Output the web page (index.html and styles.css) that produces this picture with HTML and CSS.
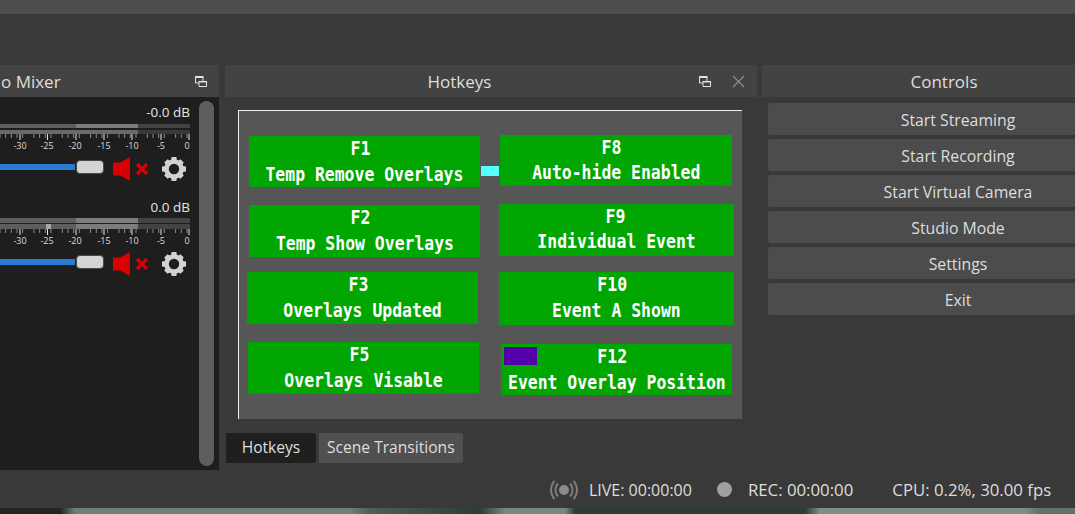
FILE: index.html
```html
<!DOCTYPE html>
<html lang="en">
<head>
  <meta charset="UTF-8">
  <title>Hotkeys</title>
<link rel="stylesheet" href="styles.css">
</head>
<body>

  <svg class="defs" width="0" height="0">
    <defs>
      <g id="scale">
        <path d="M0 0v4M5.66 0v4M11.3 0v4M17 0v4M22.6 0v4M34 0v4M39.6 0v4M45.3 0v4M51 0v4M62.3 0v4M68 0v4M73.6 0v4M79.3 0v4M90.6 0v4M96.3 0v4M102 0v4M107.6 0v4M119 0v4M124.6 0v4M130.3 0v4M136 0v4M147.3 0v4M153 0v4M158.6 0v4M164.3 0v4M175.6 0v4M181.3 0v4M187 0v4" stroke="#8a8a8a" stroke-width="1"/>
        <path d="M20 0v6M47.5 0v6M76 0v6M104 0v6M132 0v6M161 0v6M189 0v6" stroke="#e6e6e6" stroke-width="1"/>
        <g class="scale-nums">
          <text x="20" y="15">-30</text>
          <text x="47" y="15">-25</text>
          <text x="75" y="15">-20</text>
          <text x="104" y="15">-15</text>
          <text x="132" y="15">-10</text>
          <text x="161" y="15">-5</text>
          <text x="187" y="15">0</text>
        </g>
      </g>
      <g id="speaker">
        <path d="M0 5.500h7L17 0v24L7 18.500H0z" fill="#d80000"/>
        <path d="M24 7l10 10M34 7L24 17" stroke="#d80000" stroke-width="3.200" fill="none"/>
      </g>
      <g id="gear">
        <path d="M12 4.500a7.500 7.500 0 1 0 0 15a7.500 7.500 0 1 0 0-15z" fill="none" stroke="#d2d2d2" stroke-width="4.600"/>
        <path d="M9.600 0h4.800l.6 4h-6zM9.600 24h4.800l.6-4h-6zM0 9.600v4.800l4 .6v-6zM24 9.600v4.800l-4 .6v-6zM2.200 5.600l3.400-3.400 3.200 2.400-4.200 4.200zM21.800 5.600l-3.400-3.400-3.200 2.400 4.200 4.200zM2.200 18.400l3.400 3.400 3.200-2.400-4.200-4.200zM21.800 18.400l-3.400 3.400-3.200-2.400 4.200-4.200z" fill="#d2d2d2"/>
      </g>
      <g id="popout">
        <path d="M0 0h8.500v2H0z" fill="#e2e2e2"/>
        <path d="M.5 2v5h3M8 2v3" fill="none" stroke="#e2e2e2" stroke-width="1"/>
        <path d="M3.500 5h8.500v1.500H3.500z" fill="#e2e2e2"/>
        <path d="M4 6v4.500h7.500V6" fill="none" stroke="#e2e2e2" stroke-width="1"/>
      </g>
    </defs>
  </svg>

  <div class="top-strip"></div>

  <div class="docks">

    <section class="dock mixer">
      <header class="dock-head mixer-head">
        <span class="mixer-title">o Mixer</span>
        <svg class="popout" width="12" height="11"><use href="#popout"/></svg>
      </header>
      <div class="mixer-body">
        <div class="channels">
          <div class="channel">
            <div class="db">-0.0 dB</div>
            <div class="meter">
              <div class="bar bar-one"></div>
              <div class="bar bar-two"></div>
            </div>
            <svg class="scale" width="190" height="16"><use href="#scale"/></svg>
            <div class="fader-row">
              <div class="fader"><span class="fader-fill"></span><span class="fader-knob"></span></div>
              <svg class="speaker" width="36" height="24"><use href="#speaker"/></svg>
              <svg class="gear" width="24" height="24"><use href="#gear"/></svg>
            </div>
          </div>
          <div class="channel">
            <div class="db db-low">0.0 dB</div>
            <div class="meter tight">
              <div class="bar bar-one"></div>
              <div class="bar bar-one"><span class="peak"></span></div>
            </div>
            <svg class="scale" width="190" height="16"><use href="#scale"/></svg>
            <div class="fader-row">
              <div class="fader"><span class="fader-fill"></span><span class="fader-knob"></span></div>
              <svg class="speaker" width="36" height="24"><use href="#speaker"/></svg>
              <svg class="gear" width="24" height="24"><use href="#gear"/></svg>
            </div>
          </div>
        </div>
        <div class="scrollbar"></div>
      </div>
    </section>

    <section class="dock hotkeys">
      <header class="dock-head hotkeys-head">
        <span class="hotkeys-title">Hotkeys</span>
        <svg class="popout" width="12" height="11"><use href="#popout"/></svg>
        <svg class="close" width="13" height="13"><path d="M1 1l11 11M12 1L1 12" stroke="#8d8d8d" stroke-width="1.200"/></svg>
      </header>
      <div class="board">
        <div class="board-col col-left">
          <div class="hk hk-f1"><b>F1</b><span>Temp Remove Overlays</span></div>
          <div class="hk hk-f2"><b>F2</b><span>Temp Show Overlays</span></div>
          <div class="hk hk-f3"><b>F3</b><span>Overlays Updated</span></div>
          <div class="hk hk-f5"><b>F5</b><span>Overlays Visable</span></div>
        </div>
        <div class="board-col col-right">
          <div class="hk hk-f8"><b>F8</b><span>Auto-hide Enabled</span></div>
          <div class="hk hk-f9"><b>F9</b><span>Individual Event</span></div>
          <div class="hk hk-f10"><b>F10</b><span>Event A Shown</span></div>
          <div class="hk hk-f12"><i class="purple"></i><b>F12</b><span>Event Overlay Position</span></div>
        </div>
        <i class="cyan"></i>
      </div>
      <div class="tabs">
        <div class="tab tab-active">Hotkeys</div>
        <div class="tab">Scene Transitions</div>
      </div>
    </section>

    <section class="dock controls">
      <header class="dock-head controls-head">Controls</header>
      <div class="buttons">
        <div class="btn">Start Streaming</div>
        <div class="btn">Start Recording</div>
        <div class="btn">Start Virtual Camera</div>
        <div class="btn">Studio Mode</div>
        <div class="btn">Settings</div>
        <div class="btn">Exit</div>
      </div>
    </section>

  </div>

  <footer class="status">
    <svg class="live-icon" width="28" height="20" viewBox="0 0 28 20">
      <circle cx="14" cy="10" r="5" fill="#8a8a8a"/>
      <path d="M8 3.500a9.500 9.500 0 0 0 0 13M20 3.500a9.500 9.500 0 0 1 0 13M4.500 1a13.500 13.500 0 0 0 0 18M23.500 1a13.500 13.500 0 0 1 0 18" fill="none" stroke="#7d7d7d" stroke-width="2"/>
    </svg>
    <span class="live">LIVE: 00:00:00</span>
    <i class="rec-dot"></i>
    <span class="rec">REC: 00:00:00</span>
    <span class="cpu">CPU: 0.2%, 30.00 fps</span>
  </footer>

  <div class="desktop-strip"></div>

</body>
</html>
```

FILE: styles.css
```css
html, body {
  margin: 0;
  padding: 0;
}

body {
  width: 1075px;
  height: 514px;
  overflow: hidden;
  background: #3a3939;
  color: #dedede;
  font-family: 'Open Sans', sans-serif;
  font-size: 15.8px;
  display: flex;
  flex-direction: column;
}

.defs {
  position: absolute;
}

.top-strip {
  height: 14px;
  background: #4e4e4e;
  margin-bottom: 51px;
}

/* docks row */
.docks {
  display: flex;
  height: 405px;
  overflow: hidden;
}

.dock {
  display: flex;
  flex-direction: column;
  flex: none;
}

.dock-head {
  height: 32px;
  box-sizing: border-box;
  padding-top: 1px;
  background: #444344;
  display: flex;
  align-items: center;
  flex: none;
  font-size: 17px;
}

.popout {
  flex: none;
}

/* mixer */
.mixer {
  width: 219px;
  margin-right: 6px;
}

.mixer-head {
  padding-right: 12px;
}

.mixer-title {
  flex: 1;
  margin-left: 1px;
}

.mixer-body {
  flex: 1;
  background: #1f1e1f;
  display: flex;
  padding: 4px 5px 4px 0;
  overflow: hidden;
}

.channels {
  width: 190px;
  margin-right: 9px;
}

.channel {
  height: 94px;
}

.db {
  height: 23px;
  line-height: 23px;
  text-align: right;
  font-size: 13.5px;
  color: #e4e4e4;
}

.db-low {
  line-height: 25px;
}

.meter {
  display: flex;
  flex-direction: column;
  gap: 2px;
}

.meter.tight {
  gap: 1px;
}

.bar {
  height: 4px;
  position: relative;
  background: linear-gradient(to right, #5e5e5e 76px, #7c7c7c 76px, #7c7c7c 138px, #434343 138px);
}

.meter.tight .bar {
  height: 5px;
}

.bar-two {
  background: linear-gradient(to right, #6a6a6a 138px, #3a3a3a 138px);
}

.peak {
  position: absolute;
  left: 46px;
  top: 0;
  width: 5px;
  height: 100%;
  background: #a8a8a8;
}

.scale {
  display: block;
}

.scale-nums text {
  font-family: 'Open Sans', sans-serif;
  font-size: 9px;
  fill: #dcdcdc;
  text-anchor: middle;
}

.fader-row {
  display: flex;
  align-items: center;
  height: 24px;
  margin-top: 7px;
}

.fader {
  width: 104px;
  height: 14px;
  margin: 0 9px 4px 0;
  display: flex;
  align-items: center;
  flex: none;
}

.fader-fill {
  width: 75px;
  height: 6px;
  background: #2a7bd4;
}

.fader-knob {
  width: 26px;
  height: 12px;
  margin-left: 1px;
  border: 1px solid #4a4a4a;
  border-radius: 4px;
  background: #d4d4d4;
}

.speaker {
  margin-right: 13px;
  flex: none;
}

.gear {
  flex: none;
}

.scrollbar {
  width: 15px;
  border-radius: 8px;
  background: #5e5e5e;
}

/* hotkeys */
.hotkeys {
  width: 532px;
  margin-right: 5px;
}

.hotkeys-head {
  padding-right: 12px;
}

.hotkeys-title {
  flex: 1;
  padding-left: 35px;
  text-align: center;
  margin-right: 40px;
}

.close {
  margin-left: 21px;
}

.board {
  position: relative;
  width: 503px;
  height: 308px;
  margin: 13px 0 0 13px;
  background: #565656;
  border-top: 1px solid #f0f0f0;
  border-left: 1px solid #f0f0f0;
  display: flex;
}

.board-col {
  display: flex;
  flex-direction: column;
  align-items: flex-start;
}

.col-left {
  width: 252px;
  padding-left: 8px;
  box-sizing: border-box;
}

.hk {
  width: 231px;
  height: 51px;
  background: #02a602;
  color: #fff;
  position: relative;
  flex: none;
  font-family: 'DejaVu Sans Mono', monospace;
  font-weight: bold;
  display: flex;
  flex-direction: column;
  align-items: center;
  overflow: hidden;
  white-space: nowrap;
}

.hk b {
  font-size: 19px;
  line-height: 25px;
  margin-right: 9px;
  transform: scaleX(.87);
}

.hk span {
  font-size: 19px;
  line-height: 27px;
  transform: scaleX(.865);
}

.hk-f1 { margin: 25px 0 0 2px; }
.hk-f2 { margin: 18px 0 0 2px; height: 52px; }
.hk-f3 { margin: 15px 0 0 0; height: 52px; }
.hk-f5 { margin: 18px 0 0 1px; height: 52px; }

.hk-f8 { margin: 24px 0 0 9px; width: 232px; }
.hk-f9 { margin: 18px 0 0 8px; width: 235px; height: 52px; }
.hk-f10 { margin: 16px 0 0 8px; width: 235px; height: 53px; }
.hk-f12 { margin: 19px 0 0 10px; }

.hk-f8 b, .hk-f9 b { line-height: 24px; }
.hk-f8 span { line-height: 26px; }
.hk-f9 span { line-height: 26px; }
.hk-f9 b { margin-right: 3px; }
.hk-f12 span { line-height: 26px; }

.purple {
  position: absolute;
  left: 3px;
  top: 3px;
  width: 33px;
  height: 18px;
  background: #5500aa;
}

.cyan {
  position: absolute;
  left: 242px;
  top: 55px;
  width: 18px;
  height: 10px;
  background: #55ffff;
}

.tabs {
  display: flex;
  gap: 3px;
  margin: 14px 0 0 1px;
}

.tab {
  height: 30px;
  line-height: 28px;
  padding: 0 8px;
  background: #505050;
  border-radius: 0 3px 3px 0;
  font-size: 15.6px;
}

.tab-active {
  width: 90px;
  padding: 0;
  text-align: center;
  background: #201f20;
}

/* controls */
.controls {
  width: 364px;
}

.controls-head {
  justify-content: center;
}

.buttons {
  width: 380px;
  margin: 6px 0 0 6px;
  display: flex;
  flex-direction: column;
  gap: 4px;
}

.btn {
  height: 32px;
  line-height: 34px;
  text-align: center;
  background: #4c4c4c;
  border-radius: 2px;
}

/* status bar */
.status {
  height: 38px;
  box-sizing: border-box;
  display: flex;
  align-items: center;
  font-size: 16.8px;
  padding: 1px 0 0 550px;
}

.live {
  font-size: 16px;
}

.live-icon {
  flex: none;
  margin-right: 11px;
}

.rec-dot {
  width: 15px;
  height: 15px;
  margin: 0 16px 0 25px;
  border-radius: 50%;
  background: #a0a0a0;
  flex: none;
}

.cpu {
  margin-left: 39px;
}

.desktop-strip {
  height: 6px;
  background: linear-gradient(to right, #1f2623 0, #1f2623 60px, #6c8079 75px, #6c8079 350px, #4c5f58 370px, #2e3b36 480px, #76897f 505px, #76897f 565px, #2e3b36 575px, #2e3b36 805px, #7b8f88 820px, #7b8f88 1025px, #5f736c 1040px);
}
```
